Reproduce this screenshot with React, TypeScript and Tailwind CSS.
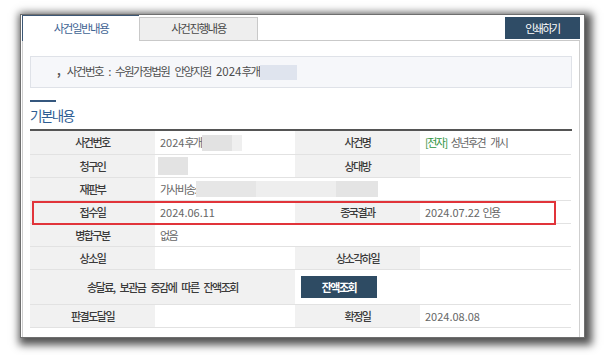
import React from "react";

const K = "tracking-[-1.5px] [word-spacing:4px]";

function Blur({ w, h, color, className = "" }: { w: string; h: string; color: string; className?: string }) {
  return <span className={`inline-block ${w} ${h} ${color} ${className}`} />;
}

function Label({ children, span = "" }: { children: React.ReactNode; span?: string }) {
  return (
    <div
      className={`flex items-center justify-center bg-[#f1f1f1] border-b border-[#e2e2e2] text-[#3a3a3a] font-medium ${K} ${span}`}
    >
      {children}
    </div>
  );
}

function Value({ children, span = "" }: { children?: React.ReactNode; span?: string }) {
  return (
    <div className={`flex items-center pl-[5px] border-b border-[#e2e2e2] text-[#666] ${span}`}>
      {children}
    </div>
  );
}

export default function App() {
  return (
    <div className="w-[606px] h-[355px] bg-white pt-[14px] pl-[20px] font-['Noto_Sans_CJK_KR',sans-serif] text-[11px]">
      <div className="w-[565px] h-[324px] bg-white border border-[#6f6f6f] shadow-[3px_3px_8px_4px_rgba(0,0,0,0.68)] pl-[1px] pr-[4px]">
        {/* tabs */}
        <div className="flex h-[26px]">
          <div className={`w-[117px] h-[26px] border-t border-l border-[#3c5775] border-r-0 bg-white flex items-center justify-center text-[#3f6494] text-[11.5px] ${K}`}>
            사건일반내용
          </div>
          <div className={`w-[119px] h-[24px] mt-[2px] border border-[#c9c9c9] bg-[#eeeeee] flex items-center justify-center text-[#4a4a4a] text-[11.5px] ${K}`}>
            사건진행내용
          </div>
          <div className="flex-1 border-b border-[#c9c9c9] flex justify-end items-start pt-[2px]">
            <div className={`w-[75px] h-[22px] bg-[#2f4c66] text-white flex items-center justify-center ${K}`}>
              인쇄하기
            </div>
          </div>
        </div>

        {/* content */}
        <div className="h-[296px] border-l border-r border-[#cfcfcf] px-[7px] pt-[15px]">
          <div className="h-[32px] border border-[#dfe2e8] bg-[#f6f7fa] flex items-center pl-[26px] text-[#4d4d4d] text-[11.5px]">
            <span className="font-bold mr-[6px] -mt-[2px] text-[#555]">,</span>
            <span className={K}>사건번호 : 수원가정법원 안양지원&nbsp;</span>
            <span>2024</span>
            <span className={K}>후개</span>
            <Blur w="w-[37px]" h="h-[15px]" color="bg-[#dfe4ee]" />
          </div>

          <div className="mt-[12px] w-[26px] h-[2px] bg-[#35577e]" />
          <div className={`h-[27px] flex items-center text-[13.5px] text-[#2d5d93] ${K}`}>기본내용</div>

          <div className="relative border-t-2 border-[#555] grid grid-cols-[125px_140px_125px_151px] grid-rows-[24px_23px_23px_23px_23px_23px_35px_23px]">
            <Label>사건번호</Label>
            <Value>
              <span>2024</span>
              <span className={K}>후개</span>
              <Blur w="w-[30px]" h="h-[16px]" color="bg-[#e2e2e2]" />
              <Blur w="w-[10px]" h="h-[16px]" color="bg-[#efefef]" />
            </Value>
            <Label>사건명</Label>
            <Value>
              <span className={`text-[#2e9440] ${K}`}>[전자]</span>
              <span className={`ml-[4px] ${K}`}>성년후견 개시</span>
            </Value>

            <Label>청구인</Label>
            <Value>
              <Blur w="w-[30px]" h="h-[18px]" color="bg-[#e3e3e3]" className="-ml-[2px]" />
            </Value>
            <Label>상대방</Label>
            <Value />

            <Label>재판부</Label>
            <Value span="col-span-3">
              <span className={K}>가사비송:</span>
              <Blur w="w-[60px]" h="h-[16px]" color="bg-[#e6e6e6]" />
              <Blur w="w-[80px]" h="h-[16px]" color="bg-[#eeeeee]" />
              <Blur w="w-[42px]" h="h-[16px]" color="bg-[#e4e4e4]" />
            </Value>

            <Label>접수일</Label>
            <Value>2024.06.11</Value>
            <Label>종국결과</Label>
            <Value>
              <span>2024.07.22&nbsp;</span>
              <span className={K}>인용</span>
            </Value>

            <Label>병합구분</Label>
            <Value span="col-span-3">
              <span className={K}>없음</span>
            </Value>

            <Label>상소일</Label>
            <Value />
            <Label>상소각하일</Label>
            <Value />

            <Label span="col-span-2">송달료, 보관금 증감에 따른 잔액조회</Label>
            <Value span="col-span-2 pl-[6px]">
              <div className={`w-[76px] h-[22px] bg-[#2e4b63] text-white font-semibold flex items-center justify-center ${K}`}>
                잔액조회
              </div>
            </Value>

            <Label>판결도달일</Label>
            <Value />
            <Label>확정일</Label>
            <Value>2024.08.08</Value>

            <div className="absolute left-[2px] top-[70px] w-[524px] h-[24px] border-2 border-[#e1343a]" />
          </div>
        </div>
      </div>
    </div>
  );
}
